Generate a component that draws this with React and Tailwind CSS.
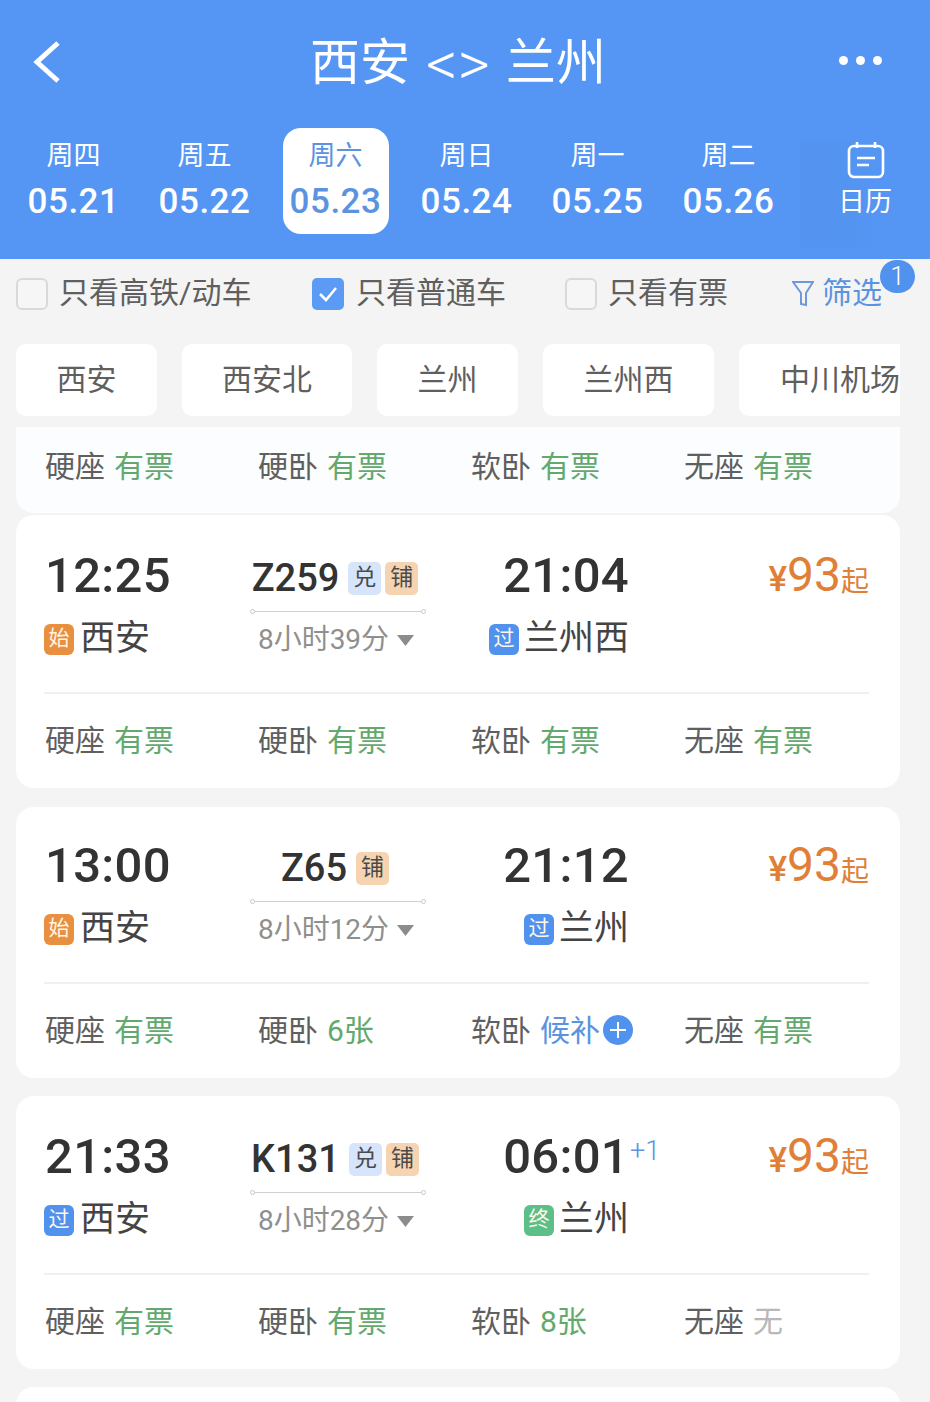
import React from "react";

const days = [
  { week: "周四", date: "05.21" },
  { week: "周五", date: "05.22" },
  { week: "周六", date: "05.23", active: true },
  { week: "周日", date: "05.24" },
  { week: "周一", date: "05.25" },
  { week: "周二", date: "05.26" },
];

const stations = [
  { name: "西安", cls: "w-[141px]" },
  { name: "西安北", cls: "w-[170px]" },
  { name: "兰州", cls: "w-[141px]" },
  { name: "兰州西", cls: "w-[171px]" },
  { name: "中川机场", cls: "w-[202px]" },
];

const allTickets = [
  { seat: "硬座", value: "有票" },
  { seat: "硬卧", value: "有票" },
  { seat: "软卧", value: "有票" },
  { seat: "无座", value: "有票" },
];

const trains = [
  {
    from: "12:25",
    fromTag: "始",
    fromName: "西安",
    no: "Z259",
    tags: ["兑", "铺"],
    duration: "8小时39分",
    to: "21:04",
    toTag: "过",
    toName: "兰州西",
    tickets: allTickets,
    cardCls: "h-[273px] mt-[2px]",
    topCls: "h-[177px] pt-[32px]",
  },
  {
    from: "13:00",
    fromTag: "始",
    fromName: "西安",
    no: "Z65",
    tags: ["铺"],
    duration: "8小时12分",
    to: "21:12",
    toTag: "过",
    toName: "兰州",
    tickets: [
      { seat: "硬座", value: "有票" },
      { seat: "硬卧", value: "6张" },
      { seat: "软卧", value: "候补", kind: "wait" },
      { seat: "无座", value: "有票" },
    ],
    cardCls: "h-[271px] mt-[19px]",
    topCls: "h-[175px] pt-[30px]",
  },
  {
    from: "21:33",
    fromTag: "过",
    fromName: "西安",
    no: "K131",
    tags: ["兑", "铺"],
    duration: "8小时28分",
    to: "06:01",
    plusDay: true,
    toTag: "终",
    toName: "兰州",
    tickets: [
      { seat: "硬座", value: "有票" },
      { seat: "硬卧", value: "有票" },
      { seat: "软卧", value: "8张" },
      { seat: "无座", value: "无", kind: "none" },
    ],
    cardCls: "h-[273px] mt-[18px]",
    topCls: "h-[177px] pt-[32px]",
  },
];

const stopColors = {
  始: "bg-[#e8903f]",
  过: "bg-[#5092ee]",
  终: "bg-[#5cbf87]",
};

const tagColors = {
  兑: "bg-[#d6e5fb]",
  铺: "bg-[#f6d4b2]",
};

function Checkbox({ checked }) {
  if (checked) {
    return (
      <span className="flex h-[32px] w-[32px] items-center justify-center rounded-[5px] bg-[#5b9bf5]">
        <svg width="22" height="18" viewBox="0 0 22 18" fill="none" stroke="#fff" strokeWidth="2.6">
          <path d="M3 9l6 6L19 3" />
        </svg>
      </span>
    );
  }
  return <span className="h-[32px] w-[32px] rounded-[6px] border-2 border-[#d9d9d9] bg-[#f6f6f6]" />;
}

function StopBadge({ label }) {
  return (
    <span className={`flex h-[31px] w-[30px] items-center justify-center rounded-[6px] text-[21px] text-[#fff6e8] ${stopColors[label]}`}>
      {label}
    </span>
  );
}

function Ticket({ seat, value, kind }) {
  return (
    <div className="flex w-[213px] items-center gap-[9px] text-[#5f5f5f]">
      <span>{seat}</span>
      {kind === "wait" ? (
        <span className="flex items-center text-[#5b93e0]">
          候补
          <svg width="30" height="30" viewBox="0 0 30 30" className="ml-[3px]">
            <circle cx="15" cy="15" r="15" fill="#5092ee" />
            <path d="M7 15h16M15 7v16" stroke="#fff" strokeWidth="2" />
          </svg>
        </span>
      ) : (
        <span className={kind === "none" ? "text-[#b8b8b8]" : "text-[#63a96e]"}>{value}</span>
      )}
    </div>
  );
}

function TicketRow({ tickets, cls }) {
  return (
    <div className={`flex items-center pl-[29px] text-[30px] ${cls}`}>
      {tickets.map((t) => (
        <Ticket key={t.seat} {...t} />
      ))}
    </div>
  );
}

function TrainCard({ train }) {
  return (
    <div className={`overflow-hidden rounded-[18px] bg-white ${train.cardCls}`}>
      <div className={train.topCls}>
        <div className="flex pl-[28px] pr-[31px]">
          <div className="w-[206px]">
            <div className="ml-[1px] flex h-[58px] items-center text-[49px] font-medium tracking-[0.3px] text-[#333]">{train.from}</div>
            <div className="mt-[14px] flex h-[40px] items-center gap-[6px] text-[35px] text-[#444]">
              <StopBadge label={train.fromTag} />
              {train.fromName}
            </div>
          </div>

          <div className="w-[176px]">
            <div className="flex h-[62px] items-center justify-center gap-[8px] pr-[6px] text-[38px] font-medium text-[#333]">
              <span className="mr-[1px]">{train.no}</span>
              <span className="flex gap-[4px]">
                {train.tags.map((tag) => (
                  <span key={tag} className={`flex h-[33px] w-[33px] items-center justify-center rounded-[5px] text-[23px] font-normal text-[#4a4a4a] ${tagColors[tag]}`}>
                    {tag}
                  </span>
                ))}
              </span>
            </div>
            <div className="flex items-center">
              <span className="h-[5px] w-[5px] rounded-full border border-[#c8c8c8]" />
              <span className="h-px flex-1 bg-[#cfcfcf]" />
              <span className="h-[5px] w-[5px] rounded-full border border-[#c8c8c8]" />
            </div>
            <div className="mt-[6px] flex h-[40px] items-center justify-center gap-[8px] pr-[4px] text-[28px] text-[#8f8f8f]">
              {train.duration}
              <svg width="17" height="11" viewBox="0 0 17 11">
                <path d="M0 0h17L8.500 11z" fill="#8c8c8c" />
              </svg>
            </div>
          </div>

          <div className="flex w-[203px] flex-col items-end">
            <div className="relative flex h-[58px] items-center text-[49px] font-medium tracking-[0.3px] text-[#333]">
              {train.to}
              {train.plusDay && (
                <span className="absolute left-[100%] top-[3px] ml-[1px] text-[27px] font-light tracking-normal text-[#5b93e0]">+1</span>
              )}
            </div>
            <div className="mt-[14px] flex h-[40px] items-center gap-[5px] text-[35px] text-[#444]">
              <StopBadge label={train.toTag} />
              {train.toName}
            </div>
          </div>

          <div className="flex h-[56px] flex-1 items-baseline justify-end text-[#e08038]">
            <span className="text-[35px] font-medium">¥</span>
            <span className="text-[48px] leading-[56px]">93</span>
            <span className="text-[28px]">起</span>
          </div>
        </div>
      </div>
      <div className="ml-[28px] mr-[31px] border-t-2 border-[#f0f0f0]" />
      <TicketRow tickets={train.tickets} cls="h-[92px]" />
    </div>
  );
}

export default function App() {
  return (
    <div className="h-[1402px] w-[930px] overflow-hidden bg-[#f4f4f4] font-['Roboto','Noto_Sans_CJK_SC',sans-serif]">
      {/* header */}
      <div className="h-[259px] bg-[#5596f5] text-white">
        <div className="flex h-[128px] items-start pl-[33px] pr-[48px] pt-[36px]">
          <svg width="28" height="48" viewBox="0 0 28 48" fill="none" stroke="#fff" strokeWidth="5" className="mt-[1px]">
            <path d="M25 6L4 25l21 19" />
          </svg>
          <div className="ml-[16px] mt-[2px] flex h-[50px] flex-1 items-center justify-center gap-[16px] text-[50px]">
            <span>西安</span>
            <span className="text-[62px] font-light">&lt;&gt;</span>
            <span>兰州</span>
          </div>
          <div className="mt-[20px] flex gap-[8px]">
            <span className="h-[9px] w-[9px] rounded-full bg-white" />
            <span className="h-[9px] w-[9px] rounded-full bg-white" />
            <span className="h-[9px] w-[9px] rounded-full bg-white" />
          </div>
        </div>

        <div className="flex pl-[8px]">
          {days.map((d) => (
            <div key={d.date} className="flex w-[131px] justify-center">
              <div className={`flex h-[106px] w-[106px] flex-col items-center rounded-[18px] pt-[13px] ${d.active ? "bg-white text-[#5b93e0]" : ""}`}>
                <div className="h-[30px] text-[27px] leading-[30px]">{d.week}</div>
                <div className="mt-[11px] h-[40px] text-[35px] font-medium leading-[40px] tracking-[0.5px]">{d.date}</div>
              </div>
            </div>
          ))}
          <div className="ml-[6px] mt-[12px] flex h-[108px] w-[116px] flex-col items-center bg-gradient-to-r from-[#5493ef] to-[#5596f5] pl-[16px]">
            <svg width="38" height="38" viewBox="0 0 38 38" fill="none" stroke="#fff" strokeWidth="2.6" className="mt-[1px]">
              <rect x="2" y="5" width="34" height="31" rx="5" />
              <path d="M10 1v6M28 1v6M10 17h18M10 24h12" />
            </svg>
            <div className="mr-[2px] mt-[8px] text-[27px] leading-[30px]">日历</div>
          </div>
        </div>
      </div>

      {/* filters */}
      <div className="flex h-[85px] items-center pb-[15px] pl-[16px] text-[30px] text-[#5f5f5f]">
        <label className="flex w-[296px] items-center gap-[11px]">
          <Checkbox />
          <span className="mb-[4px]">只看高铁/动车</span>
        </label>
        <label className="flex w-[253px] items-center gap-[12px]">
          <Checkbox checked />
          <span className="mb-[4px]">只看普通车</span>
        </label>
        <label className="flex w-[227px] items-center gap-[11px]">
          <Checkbox />
          <span className="mb-[4px]">只看有票</span>
        </label>
        <div className="relative flex items-center gap-[8px] text-[#5b93e0]">
          <svg width="22" height="28" viewBox="0 0 22 28" fill="none" stroke="#6f97dc" strokeWidth="2">
            <path d="M1 2h20l-7 11v12l-5-1V13z" />
          </svg>
          <span className="mb-[4px]">筛选</span>
          <span className="absolute left-[88px] top-[-10px] flex h-[33px] w-[35px] items-center justify-center rounded-full bg-[#5092ee] text-[26px] font-light text-white">
            1
          </span>
        </div>
      </div>

      {/* stations */}
      <div className="ml-[16px] flex h-[72px] w-[884px] gap-[25px] overflow-hidden">
        {stations.map((s) => (
          <div key={s.name} className={`flex h-[72px] shrink-0 items-center justify-center rounded-[10px] bg-white pb-[2px] text-[30px] text-[#5f5f5f] ${s.cls}`}>
            {s.name}
          </div>
        ))}
      </div>

      {/* trains */}
      <div className="ml-[16px] mt-[11px] w-[884px]">
        <div className="rounded-b-[18px] bg-[#fcfdfe]">
          <TicketRow tickets={allTickets} cls="h-[86px] pb-[8px]" />
        </div>
        {trains.map((t) => (
          <TrainCard key={t.no} train={t} />
        ))}
        <div className="mt-[18px] h-[273px] rounded-[18px] bg-white" />
      </div>
    </div>
  );
}
